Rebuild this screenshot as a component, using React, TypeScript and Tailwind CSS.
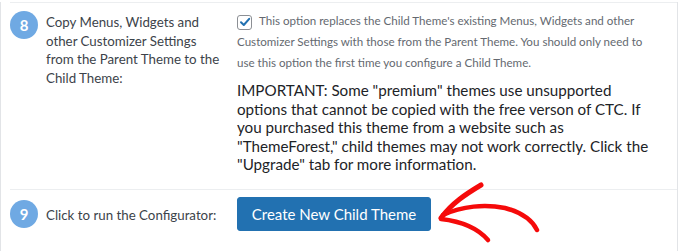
import React from "react"

function StepBadge({ n }: { n: number }) {
    return (
        <div className="flex h-[28px] w-[28px] shrink-0 items-center justify-center rounded-full bg-[#6fa9e3] text-[15px] font-bold text-white">
            {n}
        </div>
    )
}

function Arrow() {
    return (
        <svg
            className="pointer-events-none absolute left-0 top-0"
            width="680"
            height="251"
            viewBox="0 0 680 251"
            fill="none"
        >
            <path
                d="M441 218 C452 203 466 194 481 185"
                stroke="#f50a0a"
                strokeWidth="5"
                strokeLinecap="round"
            />
            <path
                d="M441 219 C458 221 476 226 488 240"
                stroke="#f50a0a"
                strokeWidth="4.5"
                strokeLinecap="round"
            />
            <path
                d="M443 215 C462 206 485 204 505 208 C520 212 532 220 537 230"
                stroke="#f50a0a"
                strokeWidth="4.5"
                strokeLinecap="round"
            />
        </svg>
    )
}

export default function App() {
    return (
        <div
            className="relative h-[251px] w-[680px] overflow-hidden bg-white"
            style={{ fontFamily: "Lato, 'Noto Sans', sans-serif" }}
        >
            <div className="h-[250px] w-[678px] border-x border-b border-[#e2e4e7]">
                <div className="ml-[9px] mt-[2px] border-t border-[#eceef0]" />

                <div className="flex h-[186px]">
                    <div className="w-[45px] shrink-0 pl-[9px] pt-[8px]">
                        <StepBadge n={8} />
                    </div>
                    <div className="w-[191px] shrink-0 whitespace-nowrap pt-[10px] text-[13.3px] leading-[18.5px] text-[#3c434a]">
                        Copy Menus, Widgets and
                        <br />
                        other Customizer Settings
                        <br />
                        from the Parent Theme to the
                        <br />
                        Child Theme:
                    </div>
                    <div className="pt-[7px]">
                        <p className="whitespace-nowrap text-[11.6px] leading-[21px] text-[#646970]">
                            <span className="mr-[7px] inline-flex h-[15px] w-[15px] translate-y-[3px] items-center justify-center rounded-[3px] border border-[#8c8f94] bg-white">
                                <svg width="12" height="12" viewBox="0 0 12 12" fill="none">
                                    <path d="M2 6.2 L4.8 9 L10.2 2.8" stroke="#2271b1" strokeWidth="2" strokeLinecap="round" strokeLinejoin="round" />
                                </svg>
                            </span>
                            This option replaces the Child Theme's existing Menus, Widgets and other
                            <br />
                            Customizer Settings with those from the Parent Theme. You should only need to
                            <br />
                            use this option the first time you configure a Child Theme.
                        </p>
                        <p className="mt-[8px] whitespace-nowrap text-[15.2px] leading-[18.5px] text-[#1d2327]">
                            IMPORTANT: Some "premium" themes use unsupported
                            <br />
                            options that cannot be copied with the free verson of CTC. If
                            <br />
                            you purchased this theme from a website such as
                            <br />
                            "ThemeForest," child themes may not work correctly. Click the
                            <br />
                            "Upgrade" tab for more information.
                        </p>
                    </div>
                </div>

                <div className="ml-[9px] border-t border-[#eceef0]" />

                <div className="flex items-center pt-[7px]">
                    <div className="w-[45px] shrink-0 pl-[9px]">
                        <StepBadge n={9} />
                    </div>
                    <div className="w-[191px] shrink-0 whitespace-nowrap pt-[4px] text-[13.3px] text-[#3c434a]">
                        Click to run the Configurator:
                    </div>
                    <button className="h-[34px] w-[194px] rounded-[3px] border border-[#2271b1] bg-[#2271b1] text-[15px] text-white">
                        Create New Child Theme
                    </button>
                </div>
            </div>
            <Arrow />
        </div>
    )
}
